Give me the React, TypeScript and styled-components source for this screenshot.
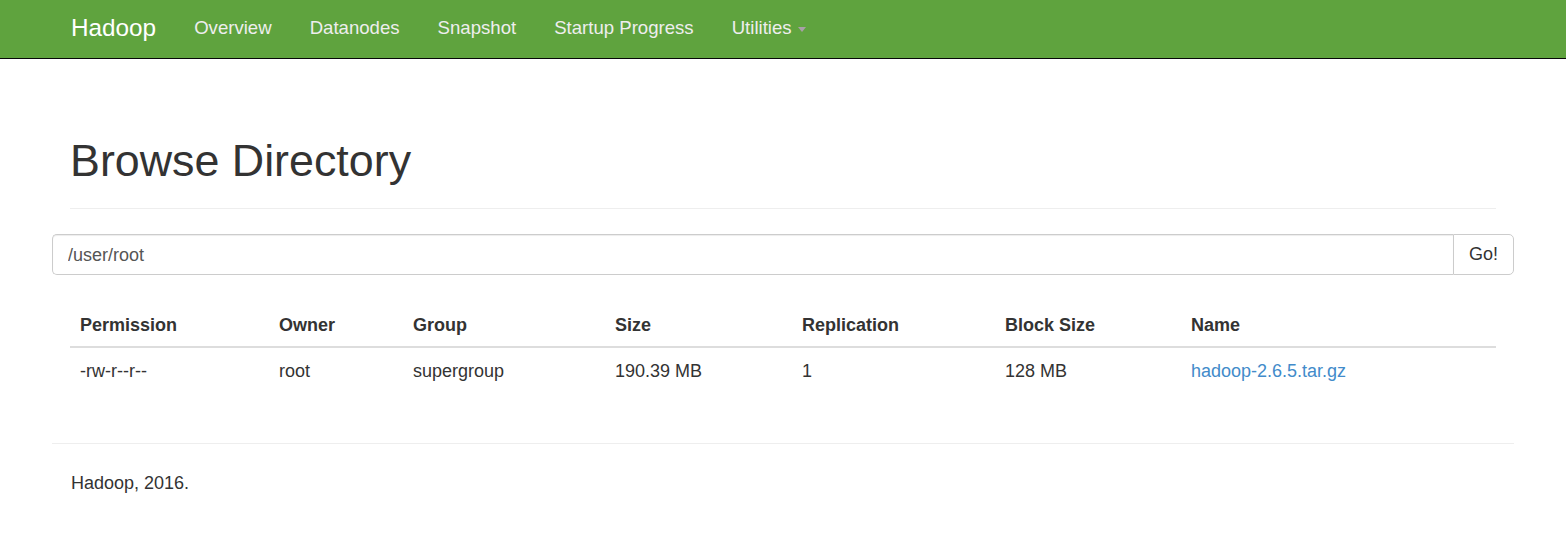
import styled, { createGlobalStyle } from 'styled-components';

const GlobalStyle = createGlobalStyle`
  html, body {
    margin: 0;
    padding: 0;
    background: #fff;
  }
  body {
    font-family: "Liberation Sans", Arial, sans-serif;
    font-size: 18px;
    color: #333;
  }
  * {
    box-sizing: border-box;
  }
`;

const NavBar = styled.nav`
  height: 59px;
  background-color: #5fa33e;
  border-bottom: 1px solid #080808;
`;

const NavInner = styled.div`
  width: 1462px;
  margin: 0 auto;
  padding: 0 19px 2px;
  height: 58px;
  display: flex;
  align-items: center;
`;

const Brand = styled.a`
  color: #fff;
  font-size: 24.3px;
  padding-right: 19px;
  text-decoration: none;
`;

const NavList = styled.ul`
  display: flex;
  list-style: none;
  margin: 0;
  padding: 0;
`;

const NavItem = styled.li`
  a {
    display: flex;
    align-items: center;
    padding: 0 19px;
    font-size: 18.6px;
    color: #eee;
    text-decoration: none;
  }
`;

const Caret = styled.span`
  display: inline-block;
  width: 0;
  height: 0;
  margin-left: 6px;
  margin-top: 3px;
  border-top: 5px solid #a9a0a8;
  border-left: 4.5px solid transparent;
  border-right: 4.5px solid transparent;
`;

const Container = styled.div`
  width: 1462px;
  margin: 0 auto;
`;

const Padded = styled.div`
  padding: 0 18px;
`;

const PageHeader = styled.div`
  margin-top: 77px;
  padding-bottom: 24px;
  border-bottom: 1px solid #eee;
`;

const Title = styled.h1`
  margin: 0;
  font-size: 44.8px;
  font-weight: 400;
  line-height: 48px;
  color: #333;
`;

const InputGroup = styled.form`
  display: flex;
  margin-top: 25px;
  height: 41px;
`;

const PathInput = styled.input`
  flex: 1;
  height: 41px;
  padding: 2px 15px 0;
  font-family: inherit;
  font-size: 18px;
  color: #555;
  border: 1px solid #ccc;
  border-right: none;
  border-radius: 5px 0 0 5px;
  box-shadow: inset 0 1px 1px rgba(0, 0, 0, 0.075);
  outline: none;
`;

const GoButton = styled.button`
  width: 61px;
  height: 41px;
  font-family: inherit;
  font-size: 18px;
  color: #333;
  background: #fff;
  border: 1px solid #ccc;
  border-radius: 0 5px 5px 0;
  cursor: pointer;
`;

const Table = styled.table`
  width: 100%;
  margin-top: 27px;
  margin-bottom: 0;
  border-collapse: collapse;
  table-layout: fixed;
`;

const Col = styled.col<{ $width: number }>`
  width: ${(p) => p.$width}px;
`;

const Th = styled.th`
  text-align: left;
  font-weight: 700;
  padding: 10px 10px 8px;
  line-height: 26px;
  border-bottom: 2px solid #ddd;
`;

const Td = styled.td`
  padding: 10px 10px 8px;
  line-height: 26px;
  border-top: 1px solid #ddd;
`;

const FileLink = styled.a`
  color: #428bca;
  text-decoration: none;
`;

const FooterRule = styled.hr`
  margin: 51px 0 0;
  border: 0;
  border-top: 1px solid #eee;
`;

const Footer = styled.footer`
  padding: 26px 19px;
  line-height: 26px;
`;

const columns = [
  { label: 'Permission', width: 199 },
  { label: 'Owner', width: 134 },
  { label: 'Group', width: 202 },
  { label: 'Size', width: 187 },
  { label: 'Replication', width: 203 },
  { label: 'Block Size', width: 186 },
  { label: 'Name', width: 315 },
];

const files = [
  {
    permission: '-rw-r--r--',
    owner: 'root',
    group: 'supergroup',
    size: '190.39 MB',
    replication: '1',
    blockSize: '128 MB',
    name: 'hadoop-2.6.5.tar.gz',
  },
];

const App = () => {
  return (
    <>
      <GlobalStyle />
      <NavBar>
        <NavInner>
          <Brand href="#">Hadoop</Brand>
          <NavList>
            <NavItem><a href="#">Overview</a></NavItem>
            <NavItem><a href="#">Datanodes</a></NavItem>
            <NavItem><a href="#">Snapshot</a></NavItem>
            <NavItem><a href="#">Startup Progress</a></NavItem>
            <NavItem>
              <a href="#">
                Utilities
                <Caret />
              </a>
            </NavItem>
          </NavList>
        </NavInner>
      </NavBar>
      <Container>
        <Padded>
          <PageHeader>
            <Title>Browse Directory</Title>
          </PageHeader>
        </Padded>
        <InputGroup onSubmit={(e) => e.preventDefault()}>
          <PathInput defaultValue="/user/root" />
          <GoButton type="submit">Go!</GoButton>
        </InputGroup>
        <Padded>
          <Table>
            <colgroup>
              {columns.map((c) => (
                <Col key={c.label} $width={c.width} />
              ))}
            </colgroup>
            <thead>
              <tr>
                {columns.map((c) => (
                  <Th key={c.label}>{c.label}</Th>
                ))}
              </tr>
            </thead>
            <tbody>
              {files.map((f) => (
                <tr key={f.name}>
                  <Td>{f.permission}</Td>
                  <Td>{f.owner}</Td>
                  <Td>{f.group}</Td>
                  <Td>{f.size}</Td>
                  <Td>{f.replication}</Td>
                  <Td>{f.blockSize}</Td>
                  <Td>
                    <FileLink href="#">{f.name}</FileLink>
                  </Td>
                </tr>
              ))}
            </tbody>
          </Table>
        </Padded>
        <FooterRule />
        <Footer>Hadoop, 2016.</Footer>
      </Container>
    </>
  );
};

export default App;
